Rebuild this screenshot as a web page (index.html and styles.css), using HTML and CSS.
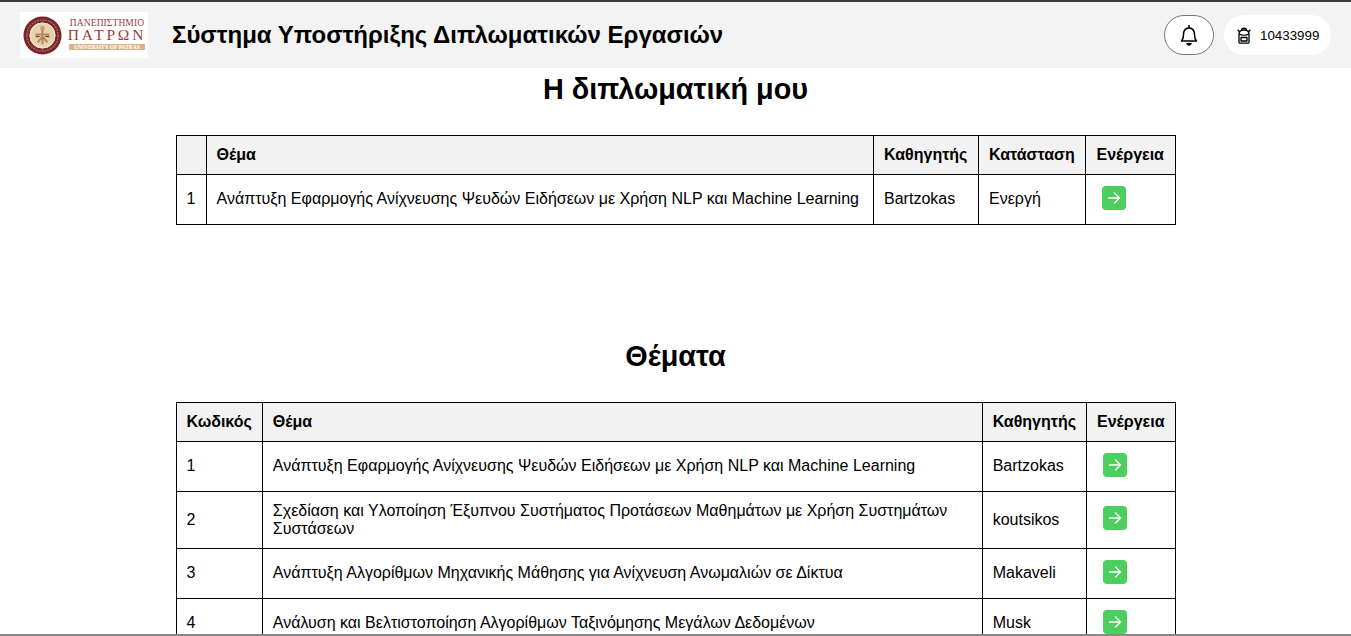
FILE: index.html
```html
<!DOCTYPE html>
<html lang="el">
<head>
<meta charset="utf-8">
<title>Σύστημα Υποστήριξης Διπλωματικών Εργασιών</title>
<link rel="stylesheet" href="styles.css">
</head>
<body>
<header class="topbar">
  <div class="brand">
    <div class="logo">
      <svg class="seal" viewBox="0 0 40 40" width="39" height="39" aria-hidden="true">
        <circle cx="20" cy="20" r="19.500" fill="#7a2426"/>
        <circle cx="20" cy="20" r="16" fill="none" stroke="#a9686a" stroke-width="1.500" stroke-dasharray="2 1"/>
        <circle cx="20" cy="20" r="14" fill="#f3e6cf" stroke="#5e1a1c" stroke-width="1"/>
        <circle cx="20" cy="20" r="12" fill="#e7d2ac"/>
        <circle cx="20" cy="12.500" r="2.500" fill="#c9a477"/>
        <path d="M20 14v15M13 19h14M15 27l5-6 5 6" fill="none" stroke="#b78a5f" stroke-width="2.200"/>
        <path d="M13 21h4M23 21h4" fill="none" stroke="#6b4a3a" stroke-width="1.500"/>
      </svg>
      <div class="logo-text">
        <span class="logo-l1">ΠΑΝΕΠΙΣΤΗΜΙΟ</span>
        <span class="logo-l2">ΠΑΤΡΩΝ</span>
        <span class="logo-l3">UNIVERSITY OF PATRAS</span>
      </div>
    </div>
    <h1 class="app-title">Σύστημα Υποστήριξης Διπλωματικών Εργασιών</h1>
  </div>
  <div class="actions">
    <button class="bell" type="button" aria-label="Ειδοποιήσεις">
      <svg viewBox="0 0 24 24" width="24" height="24" fill="none" stroke="#000" stroke-width="1.500" stroke-linejoin="round" stroke-linecap="round">
        <path d="M4.500 18c1.500-1.500 2-3.200 2-6.500 0-3.800 2.300-6.300 5.500-6.800 3.200.5 5.500 3 5.500 6.800 0 3.300.5 5 2 6.500z"/>
        <path d="M12 2.500v2"/>
        <path d="M10 20.800h4l-2 1.200z" fill="#000"/>
      </svg>
    </button>
    <div class="user">
      <svg viewBox="0 0 14 17" width="14" height="17" fill="none" stroke="#000" stroke-width="1.300" stroke-linejoin="round">
        <path d="M2 7c0-2.500 2-4 5-4s5 1.500 5 4v8.200c0 .6-.4 1-1 1H3c-.6 0-1-.4-1-1z"/>
        <path d="M4.500 3.200C4.500 .3 9.500 .3 9.500 3.200"/>
        <path d="M.7 2.800 2.800 5M13.300 2.800 11.200 5"/>
        <path d="M2.200 7.200c2.500 1.200 7.100 1.200 9.600 0"/>
        <path d="M4 10.500h6v3.500H4z"/>
      </svg>
      <span class="user-id">10433999</span>
    </div>
  </div>
</header>

<main class="content">
  <section class="block block-mine">
    <h2 class="heading">Η διπλωματική μου</h2>
    <table class="data">
      <thead>
        <tr><th></th><th>Θέμα</th><th>Καθηγητής</th><th>Κατάσταση</th><th>Ενέργεια</th></tr>
      </thead>
      <tbody>
        <tr>
          <td>1</td>
          <td>Ανάπτυξη Εφαρμογής Ανίχνευσης Ψευδών Ειδήσεων με Χρήση NLP και Machine Learning</td>
          <td>Bartzokas</td>
          <td>Ενεργή</td>
          <td class="action"><a class="go" href="#"><svg viewBox="0 0 24 24" width="24" height="24" fill="none" stroke="#fff" stroke-width="1.500" stroke-linecap="round" stroke-linejoin="round"><path d="M6.500 12h11M12.500 7l5 5-5 5"/></svg></a></td>
        </tr>
      </tbody>
    </table>
  </section>

  <section class="block block-topics">
    <h2 class="heading">Θέματα</h2>
    <table class="data">
      <thead>
        <tr><th>Κωδικός</th><th>Θέμα</th><th>Καθηγητής</th><th>Ενέργεια</th></tr>
      </thead>
      <tbody>
        <tr>
          <td>1</td>
          <td>Ανάπτυξη Εφαρμογής Ανίχνευσης Ψευδών Ειδήσεων με Χρήση NLP και Machine Learning</td>
          <td>Bartzokas</td>
          <td class="action"><a class="go" href="#"><svg viewBox="0 0 24 24" width="24" height="24" fill="none" stroke="#fff" stroke-width="1.500" stroke-linecap="round" stroke-linejoin="round"><path d="M6.500 12h11M12.500 7l5 5-5 5"/></svg></a></td>
        </tr>
        <tr class="two-line">
          <td>2</td>
          <td>Σχεδίαση και Υλοποίηση Έξυπνου Συστήματος Προτάσεων Μαθημάτων με Χρήση Συστημάτων Συστάσεων</td>
          <td>koutsikos</td>
          <td class="action"><a class="go" href="#"><svg viewBox="0 0 24 24" width="24" height="24" fill="none" stroke="#fff" stroke-width="1.500" stroke-linecap="round" stroke-linejoin="round"><path d="M6.500 12h11M12.500 7l5 5-5 5"/></svg></a></td>
        </tr>
        <tr>
          <td>3</td>
          <td>Ανάπτυξη Αλγορίθμων Μηχανικής Μάθησης για Ανίχνευση Ανωμαλιών σε Δίκτυα</td>
          <td>Makaveli</td>
          <td class="action"><a class="go" href="#"><svg viewBox="0 0 24 24" width="24" height="24" fill="none" stroke="#fff" stroke-width="1.500" stroke-linecap="round" stroke-linejoin="round"><path d="M6.500 12h11M12.500 7l5 5-5 5"/></svg></a></td>
        </tr>
        <tr>
          <td>4</td>
          <td>Ανάλυση και Βελτιστοποίηση Αλγορίθμων Ταξινόμησης Μεγάλων Δεδομένων</td>
          <td>Musk</td>
          <td class="action"><a class="go" href="#"><svg viewBox="0 0 24 24" width="24" height="24" fill="none" stroke="#fff" stroke-width="1.500" stroke-linecap="round" stroke-linejoin="round"><path d="M6.500 12h11M12.500 7l5 5-5 5"/></svg></a></td>
        </tr>
      </tbody>
    </table>
  </section>
</main>
<div class="edge"></div>
</body>
</html>
```
FILE: styles.css
```css
* { box-sizing: border-box; }
html, body { height: 100%; }
body {
  margin: 0;
  overflow: hidden;
  background: #fff;
  color: #000;
  font-family: "Liberation Sans", Arial, sans-serif;
  font-size: 16px;
}
.topbar {
  height: 68px;
  border-top: 2px solid #3c3c3c;
  background: #f3f3f3;
  display: flex;
  align-items: center;
  justify-content: space-between;
  padding: 0 20px;
}
.brand { display: flex; align-items: center; gap: 24px; }
.logo {
  width: 128px;
  height: 46px;
  background: #fff;
  display: flex;
  align-items: center;
  gap: 7px;
  padding-left: 3px;
}
.seal { flex: none; }
.logo-text {
  width: 76px;
  padding-bottom: 2px;
  display: flex;
  flex-direction: column;
  align-items: center;
  font-family: "Liberation Serif", serif;
  color: #9a3f3f;
  white-space: nowrap;
}
.logo-l1 { font-size: 9.500px; line-height: 10px; letter-spacing: .1px; }
.logo-l2 { font-size: 15.500px; line-height: 14px; letter-spacing: 2.800px; }
.logo-l3 {
  width: 76px;
  margin-top: 2px;
  background: #d9b48c;
  color: #fff;
  font-size: 5.500px;
  line-height: 6px;
  font-weight: bold;
  text-align: center;
}
.app-title { margin: 0; font-size: 24px; font-weight: bold; line-height: 28px; }
.actions { display: flex; align-items: center; gap: 10px; }
.bell {
  width: 50px;
  height: 40px;
  border: 1px solid #777;
  border-radius: 20px;
  background: #fff;
  padding: 0;
  display: flex;
  align-items: center;
  justify-content: center;
}
.user {
  width: 107px;
  height: 40px;
  border-radius: 20px;
  background: #fff;
  display: flex;
  align-items: center;
  gap: 9px;
  padding-left: 13px;
}
.user-id { font-size: 13.333px; }
.content { display: flex; flex-direction: column; align-items: center; }
.block { width: 1000px; }
.block-mine { margin-top: 5px; }
.block-topics { margin-top: 115px; }
.heading {
  margin: 0 0 29px;
  text-align: center;
  font-size: 28.800px;
  line-height: 33px;
  font-weight: bold;
}
.data { width: 100%; border-collapse: collapse; }
.data th, .data td {
  border: 1px solid #000;
  text-align: left;
  line-height: 18px;
}
.data th { padding: 10px; background: #f2f2f2; font-weight: bold; }
.data td { padding: 9px 10px 11px; }
.data .two-line td { padding: 10px; }
.data .two-line .action { padding: 9px 10px 11px; }
.go {
  display: block;
  width: 24px;
  height: 24px;
  margin: 1.500px 6px 3.500px;
  border-radius: 4px;
  background: #4ccf5f;
}
.go svg { display: block; }
.edge {
  position: fixed;
  left: 0;
  right: 0;
  bottom: 0;
  height: 2px;
  background: #8a8a8a;
}
```
